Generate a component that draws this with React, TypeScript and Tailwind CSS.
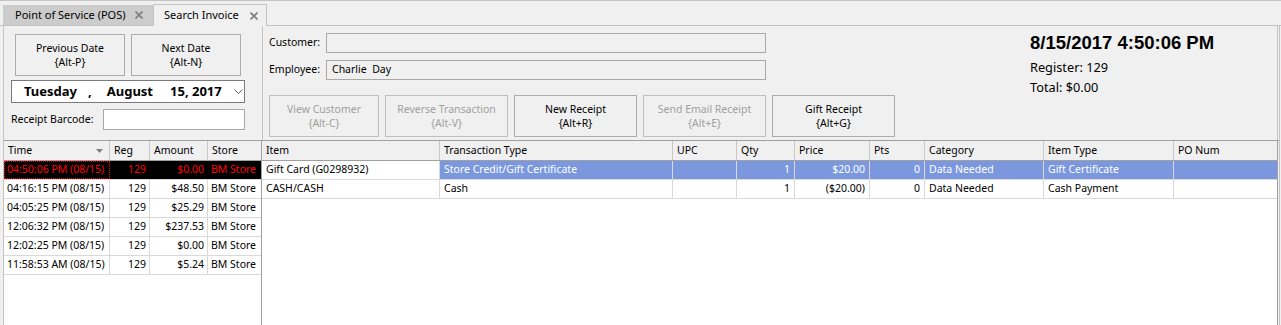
import React from "react";

const F = { fontFamily: '"Noto Sans", "Open Sans", sans-serif' };

function Btn({ l1, l2, w, disabled }: { l1: string; l2: string; w: string; disabled?: boolean }) {
  return (
    <div
      className={`${w} h-[42px] shrink-0 border flex flex-col items-center justify-center leading-[14px] whitespace-nowrap ${
        disabled ? "border-[#bfbfbf] text-[#a0a0a0]" : "border-[#adadad] text-black"
      }`}
    >
      <div>{l1}</div>
      <div>{l2}</div>
    </div>
  );
}

function X() {
  return (
    <svg width="8" height="8" viewBox="0 0 8 8">
      <path d="M0.5 0.5 L7.5 7.5 M7.5 0.5 L0.5 7.5" stroke="#7f7f7f" strokeWidth="1.6" />
    </svg>
  );
}

const leftCols = ["w-[106px]", "w-[40px]", "w-[58px]", "w-[55px]"];
const rightCols = [
  "w-[178px]",
  "w-[233px]",
  "w-[64px]",
  "w-[58px]",
  "w-[75px]",
  "w-[55px]",
  "w-[119px]",
  "w-[130px]",
  "flex-1",
];

const leftRows = [
  ["04:50:06 PM (08/15)", "129", "$0.00", "BM Store"],
  ["04:16:15 PM (08/15)", "129", "$48.50", "BM Store"],
  ["04:05:25 PM (08/15)", "129", "$25.29", "BM Store"],
  ["12:06:32 PM (08/15)", "129", "$237.53", "BM Store"],
  ["12:02:25 PM (08/15)", "129", "$0.00", "BM Store"],
  ["11:58:53 AM (08/15)", "129", "$5.24", "BM Store"],
];
const leftAlign = ["text-left", "text-right", "text-right", "text-left"];

const rightHeaders = ["Item", "Transaction Type", "UPC", "Qty", "Price", "Pts", "Category", "Item Type", "PO Num"];
const rightRows = [
  ["Gift Card (G0298932)", "Store Credit/Gift Certificate", "", "1", "$20.00", "0", "Data Needed", "Gift Certificate", ""],
  ["CASH/CASH", "Cash", "", "1", "($20.00)", "0", "Data Needed", "Cash Payment", ""],
];
const rightAlign = ["text-left", "text-left", "text-left", "text-right", "text-right", "text-right", "text-left", "text-left", "text-left"];

export default function App() {
  return (
    <div style={F} className="w-[1281px] h-[325px] bg-[#f0f0f0] overflow-hidden flex flex-col text-[10.5px] text-black">
      <div className="h-px bg-[#c4c4c4] shrink-0" />
      {/* tabs */}
      <div className="h-[25px] shrink-0 flex items-end pl-[3px] border-b border-[#c4c4c4] whitespace-nowrap">
        <div className="w-[150px] h-[20px] bg-[#cccccc] flex items-center pl-[12px] pr-[10px] justify-between text-[11px]">
          <span>Point of Service (POS)</span>
          <X />
        </div>
        <div className="w-[114px] h-[22px] bg-[#f0f0f0] border border-b-0 border-[#c4c4c4] -mb-px flex items-center pl-[10px] pr-[8px] justify-between text-[11px]">
          <span>Search Invoice</span>
          <X />
        </div>
      </div>
      {/* content */}
      <div className="flex-1 ml-[3px] w-[1277px] border-l border-r border-[#c4c4c4] flex flex-col min-h-0">
        {/* top section */}
        <div className="h-[114px] shrink-0 flex">
          <div className="w-[258px] shrink-0 flex flex-col pl-[7px]">
            <div className="flex gap-[6px] pl-[4px] mt-[8px]">
              <Btn l1="Previous Date" l2="{Alt-P}" w="w-[110px]" />
              <Btn l1="Next Date" l2="{Alt-N}" w="w-[110px]" />
            </div>
            <div className="mt-[4px] w-[234px] h-[23px] border border-[#7a7a7a] bg-white flex items-center font-bold text-[13px] relative whitespace-nowrap">
              <span className="ml-[12px]">Tuesday</span>
              <span className="ml-[11px]">,</span>
              <span className="ml-[15px]">August</span>
              <span className="ml-[17px]">15, 2017</span>
              <svg className="absolute left-[222px] top-[8px]" width="9" height="6" viewBox="0 0 9 6">
                <path d="M0.5 0.5 L4.5 4.5 L8.5 0.5" fill="none" stroke="#606060" strokeWidth="1" />
              </svg>
            </div>
            <div className="mt-[6px] flex items-center whitespace-nowrap">
              <span className="w-[92px]">Receipt Barcode:</span>
              <div className="w-[142px] h-[21px] bg-white border border-[#a8a8a8]" />
            </div>
          </div>
          <div className="flex-1 mr-px border-l border-r border-[#c4c4c4] flex">
            <div className="flex flex-col pl-[6px] pt-[7px]">
              <div className="flex items-center h-[20px] whitespace-nowrap">
                <span className="w-[57px]">Customer:</span>
                <div className="w-[440px] h-[20px] border border-[#a8a8a8]" />
              </div>
              <div className="flex items-center h-[20px] mt-[7px] whitespace-nowrap">
                <span className="w-[57px]">Employee:</span>
                <div className="w-[440px] h-[20px] border border-[#a8a8a8] flex items-center pl-[5px]">Charlie&nbsp; Day</div>
              </div>
              <div className="flex mt-[15px] gap-[6px]">
                <Btn l1="View Customer" l2="{Alt-C}" w="w-[110px]" disabled />
                <Btn l1="Reverse Transaction" l2="{Alt-V}" w="w-[123px]" disabled />
                <Btn l1="New Receipt" l2="{Alt+R}" w="w-[123px]" />
                <Btn l1="Send Email Receipt" l2="{Alt+E}" w="w-[123px]" disabled />
                <Btn l1="Gift Receipt" l2="{Alt+G}" w="w-[123px]" />
              </div>
            </div>
            <div className="ml-[135px] pt-[5px] flex flex-col whitespace-nowrap">
              <div
                className="font-bold text-[18.5px] leading-[24px]"
                style={{ fontFamily: '"Liberation Sans", Arial, sans-serif' }}
              >
                8/15/2017 4:50:06 PM
              </div>
              <div className="mt-[3px] leading-[18px] text-[12.75px]">Register: 129</div>
              <div className="mt-[2px] leading-[18px] text-[12.75px]">Total: $0.00</div>
            </div>
          </div>
        </div>
        {/* grids */}
        <div className="flex-1 flex min-h-0 border-t border-[#a0a0a0]">
          {/* left grid */}
          <div className="w-[258px] shrink-0 bg-white flex flex-col border-r border-[#a0a0a0]">
            <div className="h-[20px] flex bg-[#f0f0f0] border-b border-[#a0a0a0]">
              {["Time", "Reg", "Amount", "Store"].map((h, i) => (
                <div
                  key={h}
                  className={`${leftCols[i]} shrink-0 ${i < 3 ? "border-r border-[#c8c8c8]" : ""} pl-[4px] flex items-center relative`}
                >
                  {h}
                  {i === 0 && (
                    <svg className="absolute left-[92px] top-[8px]" width="7" height="4" viewBox="0 0 7 4">
                      <path d="M0 0 L7 0 L3.5 4 Z" fill="#808080" />
                    </svg>
                  )}
                </div>
              ))}
            </div>
            {leftRows.map((r, ri) => (
              <div
                key={ri}
                className={`h-[19px] flex border-b border-[#d9d9d9] ${ri === 0 ? "bg-black text-[#ff0000]" : ""}`}
              >
                {r.map((c, i) => (
                  <div
                    key={i}
                    className={`${leftCols[i]} shrink-0 ${i < 3 ? "border-r" : ""} ${
                      ri === 0 ? "border-black" : "border-[#d9d9d9]"
                    } px-[3px] flex items-center ${leftAlign[i] === "text-right" ? "justify-end" : ""} whitespace-nowrap overflow-hidden ${
                      ri === 0 && i === 0 ? "outline outline-1 outline-dotted outline-[#ff0000] -outline-offset-1" : ""
                    }`}
                  >
                    {c}
                  </div>
                ))}
              </div>
            ))}
          </div>
          {/* right grid */}
          <div className="flex-1 mr-px bg-white flex flex-col border-r border-[#a0a0a0]">
            <div className="h-[20px] flex bg-[#f0f0f0] border-b border-[#a0a0a0]">
              {rightHeaders.map((h, i) => (
                <div
                  key={h}
                  className={`${rightCols[i]} shrink-0 ${i < 8 ? "border-r border-[#c8c8c8]" : ""} pl-[4px] flex items-center`}
                >
                  {h}
                </div>
              ))}
            </div>
            {rightRows.map((r, ri) => (
              <div key={ri} className="h-[19px] flex border-b border-[#d9d9d9]">
                {r.map((c, i) => {
                  const sel = ri === 0 && i > 0;
                  return (
                    <div
                      key={i}
                      className={`${rightCols[i]} shrink-0 ${i < 8 ? "border-r border-[#d9d9d9]" : ""} ${
                        sel ? "bg-[#7b98de] text-white" : ""
                      } px-[4px] flex items-center ${rightAlign[i] === "text-right" ? "justify-end" : ""} whitespace-nowrap overflow-hidden`}
                    >
                      {c}
                    </div>
                  );
                })}
              </div>
            ))}
          </div>
        </div>
      </div>
    </div>
  );
}
